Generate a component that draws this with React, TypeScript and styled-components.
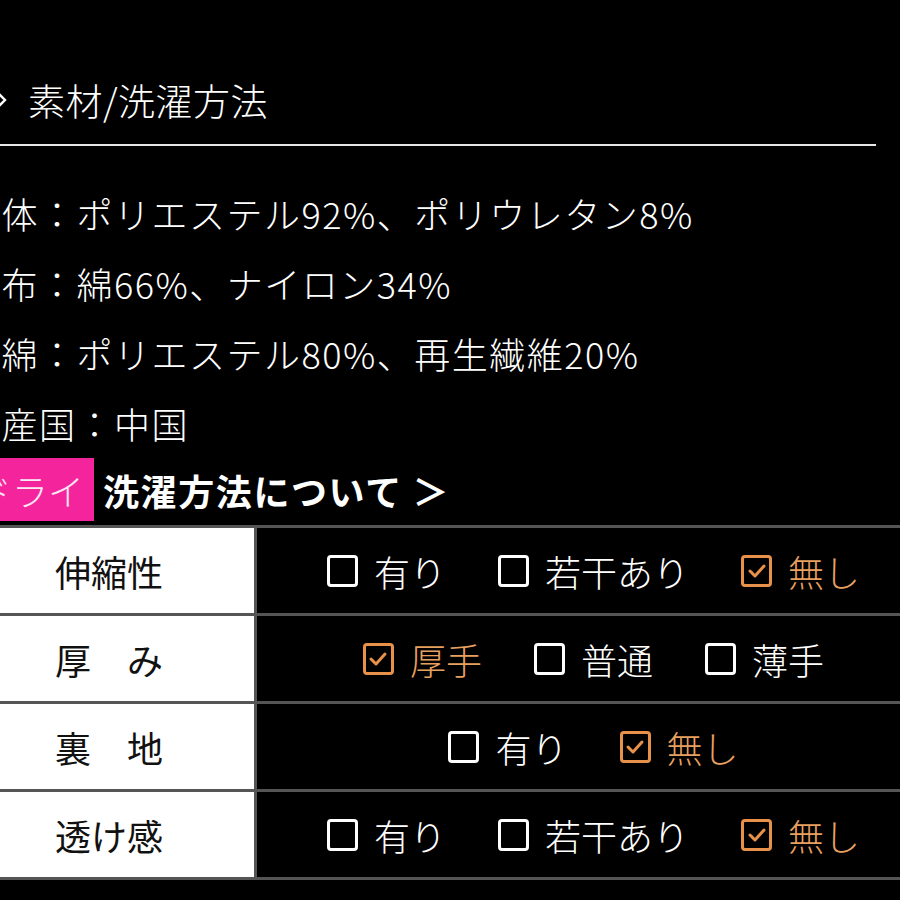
import React from 'react';
import styled, { createGlobalStyle } from 'styled-components';

const GlobalStyle = createGlobalStyle`
  html, body {
    margin: 0;
    padding: 0;
    background: #000;
    overflow: hidden;
  }
  body {
    font-family: 'Noto Sans CJK JP', 'Noto Sans', sans-serif;
    color: #fff;
  }
`;

const thinFont = `'Noto Sans CJK JP Light', 'Noto Sans CJK JP DemiLight', 'Noto Sans CJK JP', sans-serif`;

type Option = { label: string; checked?: boolean };

const rows: { name: string; options: Option[] }[] = [
  {
    name: '伸縮性',
    options: [{ label: '有り' }, { label: '若干あり' }, { label: '無し', checked: true }],
  },
  {
    name: '厚　み',
    options: [{ label: '厚手', checked: true }, { label: '普通' }, { label: '薄手' }],
  },
  {
    name: '裏　地',
    options: [{ label: '有り' }, { label: '無し', checked: true }],
  },
  {
    name: '透け感',
    options: [{ label: '有り' }, { label: '若干あり' }, { label: '無し', checked: true }],
  },
];

const materials = [
  '本体：ポリエステル92%、ポリウレタン8%',
  '裏布：綿66%、ナイロン34%',
  '中綿：ポリエステル80%、再生繊維20%',
  '原産国：中国',
];

const Checkbox: React.FC<{ checked?: boolean }> = ({ checked }) => (
  <Box checked={checked}>
    {checked && (
      <svg width="20" height="16" viewBox="0 0 20 16">
        <polyline
          points="3,8 8,13 17,3"
          fill="none"
          stroke="#e8914a"
          strokeWidth="3"
          strokeLinecap="round"
          strokeLinejoin="round"
        />
      </svg>
    )}
  </Box>
);

const App: React.FC = () => {
  return (
    <>
      <GlobalStyle />
      <Page>
        <Heading>
          <Chevron viewBox="0 0 14 24" width="14" height="24">
            <polyline points="2,3 11,12 2,21" fill="none" stroke="#fff" strokeWidth="2.4" />
          </Chevron>
          <HeadingText>素材/洗濯方法</HeadingText>
        </Heading>

        <MaterialList>
          {materials.map((m) => (
            <MaterialLine key={m}>{m}</MaterialLine>
          ))}
        </MaterialList>

        <WashRow>
          <DryTag>ドライ</DryTag>
          <WashLink>洗濯方法について ＞</WashLink>
        </WashRow>

        <Table>
          {rows.map((row) => (
            <React.Fragment key={row.name}>
              <NameCell>{row.name}</NameCell>
              <OptionCell>
                {row.options.map((opt) => (
                  <OptionItem key={opt.label} checked={opt.checked}>
                    <Checkbox checked={opt.checked} />
                    <span>{opt.label}</span>
                  </OptionItem>
                ))}
              </OptionCell>
            </React.Fragment>
          ))}
        </Table>
      </Page>
    </>
  );
};

const Page = styled.div`
  margin-left: -36px;
  width: 966px;
  padding-top: 75px;
`;

const Heading = styled.div`
  display: flex;
  align-items: center;
  height: 50px;
  padding-bottom: 19px;
  margin-right: 54px;
  border-bottom: 2px solid #e6e6e6;
`;

const Chevron = styled.svg`
  margin-left: 30px;
  margin-right: 20px;
  flex-shrink: 0;
`;

const HeadingText = styled.span`
  font-family: ${thinFont};
  font-size: 37px;
  font-weight: 300;
  letter-spacing: 0.5px;
  line-height: 50px;
`;

const MaterialList = styled.div`
  margin-top: 32px;
`;

const MaterialLine = styled.div`
  font-family: ${thinFont};
  font-size: 36px;
  line-height: 70px;
  height: 70px;
  font-weight: 300;
  white-space: nowrap;
  letter-spacing: 1.5px;
`;

const WashRow = styled.div`
  display: flex;
  align-items: center;
  height: 63px;
  margin-bottom: 4px;
`;

const DryTag = styled.div`
  height: 63px;
  display: flex;
  align-items: center;
  padding: 0 10px 0 12px;
  background: #f4259c;
  font-family: ${thinFont};
  font-size: 36px;
  font-weight: 300;
  color: #fde6f3;
`;

const WashLink = styled.div`
  margin-left: 9px;
  font-size: 36px;
  font-weight: 700;
  letter-spacing: 1.6px;
  white-space: nowrap;
`;

const Table = styled.div`
  display: grid;
  grid-template-columns: 290px 1fr;
  grid-auto-rows: 85px;
  gap: 3px;
  padding: 3px 0;
  background: #555;
`;

const NameCell = styled.div`
  background: #fff;
  color: #111;
  display: flex;
  align-items: center;
  justify-content: center;
  font-size: 36px;
  font-weight: 400;
  white-space: pre;
`;

const OptionCell = styled.div`
  background: #000;
  display: flex;
  align-items: center;
  justify-content: center;
  gap: 52px;
`;

const OptionItem = styled.div<{ checked?: boolean }>`
  display: flex;
  align-items: center;
  gap: 16px;
  font-family: ${thinFont};
  font-size: 36px;
  font-weight: 300;
  color: ${(p) => (p.checked ? '#e8a060' : '#fff')};
  white-space: nowrap;
`;

const Box = styled.div<{ checked?: boolean }>`
  box-sizing: border-box;
  width: 31px;
  height: 32px;
  border: 3px solid ${(p) => (p.checked ? '#e8914a' : '#fff')};
  border-radius: 4px;
  display: flex;
  align-items: center;
  justify-content: center;
  flex-shrink: 0;
`;

export default App;
